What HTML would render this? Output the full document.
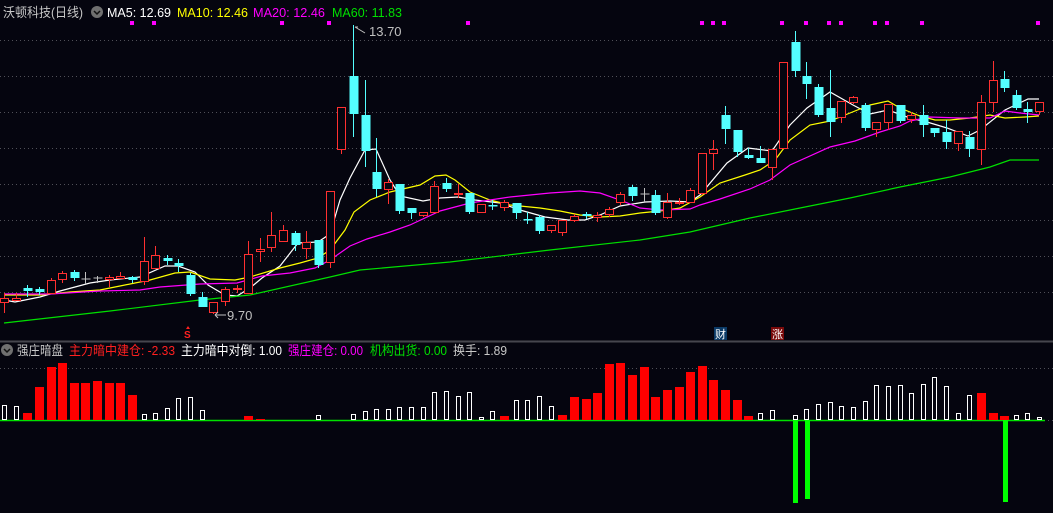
<!DOCTYPE html>
<html><head><meta charset="utf-8"><style>
html,body{margin:0;padding:0;background:#05050f;width:1053px;height:513px;overflow:hidden}
svg{display:block}
text{font-family:"Liberation Sans","Noto Sans CJK SC",sans-serif}
</style></head><body>
<svg id="s" width="1053" height="513" xmlns="http://www.w3.org/2000/svg">
<rect width="1053" height="513" fill="#05050f"/>
<g id="grid" stroke="#505058" stroke-width="1" stroke-dasharray="1,3"></g>
<line x1="0" y1="341.5" x2="1053" y2="341.5" stroke="#46464e" stroke-width="2"/>
<g id="ma"></g>
<g id="c"></g>
<g id="sub"></g>
<g id="dots" fill="#ff00ff"></g>
<text x="3" y="17" font-size="13" fill="#c8c8c8" textLength="80" lengthAdjust="spacingAndGlyphs">沃顿科技(日线)</text>
<circle cx="97" cy="12" r="6" fill="#707070"/><path d="M94 11l3 3 3-3" stroke="#111" stroke-width="1.5" fill="none"/>
<text x="107" y="17" font-size="13" fill="#ffffff" textLength="64" lengthAdjust="spacingAndGlyphs">MA5: 12.69</text>
<text x="177" y="17" font-size="13" fill="#ffff00" textLength="71" lengthAdjust="spacingAndGlyphs">MA10: 12.46</text>
<text x="253" y="17" font-size="13" fill="#ff00ff" textLength="72" lengthAdjust="spacingAndGlyphs">MA20: 12.46</text>
<text x="332" y="17" font-size="13" fill="#00e000" textLength="70" lengthAdjust="spacingAndGlyphs">MA60: 11.83</text>
<text x="369" y="36" font-size="13" fill="#c0c0c0">13.70</text>
<path d="M355 27h3M355 27l10 6" stroke="#c0c0c0" fill="none"/>
<text x="227" y="320" font-size="13" fill="#c0c0c0">9.70</text>
<path d="M215 315h11M215 315l3-3M215 315l3 3" stroke="#c0c0c0" fill="none"/>
<text x="184" y="338" font-size="10" font-weight="bold" fill="#ff2020">S</text>
<path d="M186 329l2-3 2 3z" fill="#ff2020"/>
<rect x="714" y="327" width="13" height="13" fill="#0b3a66"/>
<text x="715" y="338" font-size="11" fill="#fff">财</text>
<rect x="771" y="327" width="13" height="13" fill="#7a0a0a"/>
<text x="772" y="338" font-size="11" fill="#fff">涨</text>
<circle cx="7" cy="350" r="6" fill="#707070"/><path d="M4 349l3 3 3-3" stroke="#111" stroke-width="1.5" fill="none"/>
<text x="17" y="355" font-size="13" fill="#c8c8c8" textLength="46" lengthAdjust="spacingAndGlyphs">强庄暗盘</text>
<text x="69" y="355" font-size="13" fill="#ff2020" textLength="106" lengthAdjust="spacingAndGlyphs">主力暗中建仓: -2.33</text>
<text x="181" y="355" font-size="13" fill="#ffffff" textLength="101" lengthAdjust="spacingAndGlyphs">主力暗中对倒: 1.00</text>
<text x="288" y="355" font-size="13" fill="#ff00ff" textLength="75" lengthAdjust="spacingAndGlyphs">强庄建仓: 0.00</text>
<text x="370" y="355" font-size="13" fill="#00e000" textLength="77" lengthAdjust="spacingAndGlyphs">机构出货: 0.00</text>
<text x="453" y="355" font-size="13" fill="#c8c8c8" textLength="54" lengthAdjust="spacingAndGlyphs">换手: 1.89</text>
</svg>
<script>
var NS="http://www.w3.org/2000/svg";
function el(p,t,a){var e=document.createElementNS(NS,t);for(var k in a)e.setAttribute(k,a[k]);p.appendChild(e);return e;}
var g=document.getElementById('grid');
[40,76,112,148,184,220,256,292,368,420].forEach(function(y){el(g,'line',{x1:0,y1:y+.5,x2:1053,y2:y+.5});});
var C=[['r',298,302,293,313],['r',298,300,293,301],['c',288,291,285,297],['c',289,292,287,295],['r',280,293,278,294],
['r',273,279,271,283],['c',272,278,270,281],['g',279,280,272,284],['g',278,279,276,283],['r',277,279,275,287],
['r',276,278,272,278],['c',277,280,276,283],['r',261,281,237,285],['r',255,268,246,269],['c',258,261,255,265],
['c',263,266,259,272],['c',275,294,273,296],['c',297,307,292,307],['r',302,312,302,314],['r',289,301,287,306],
['r',288,289,285,293],['r',254,293,241,293],['r',249,251,238,262],['r',235,247,212,252],['r',230,241,225,241],
['c',233,245,231,251],['r',242,248,231,259],['c',240,265,240,268],['r',191,262,191,268],['r',107,149,107,154],
['c',76,114,25,137],['c',115,151,80,167],['c',172,189,138,197],['r',182,189,179,204],['c',184,211,184,214],
['c',208,213,208,219],['r',212,215,212,217],['r',186,212,181,213],['c',183,189,178,192],['r',193,194,184,198],
['c',193,212,193,214],['r',204,212,204,213],['c',205,206,200,210],['r',202,207,200,211],['c',203,213,203,219],
['c',219,220,212,224],['c',217,231,215,234],['r',225,230,225,233],['r',220,232,220,236],['r',216,220,214,222],
['c',214,216,212,219],['r',215,217,212,222],['r',209,214,207,217],['r',194,202,192,205],['c',187,196,185,201],
['g',194,195,188,202],['c',195,213,190,215],['r',202,217,193,219],['r',202,203,198,205],['r',190,202,188,203],
['r',153,193,153,195],['r',149,153,140,170],['c',115,129,106,144],['c',130,152,130,157],['c',155,158,148,159],
['c',158,163,146,163],['r',149,167,149,180],['r',62,148,62,148],['c',42,71,31,77],['c',76,84,62,99],
['c',87,115,84,117],['c',108,122,70,137],['r',101,117,101,123],['r',97,102,96,104],['c',105,128,103,131],
['r',122,129,122,137],['r',104,122,104,130],['c',105,121,105,123],['r',115,119,112,123],['c',115,125,105,137],
['c',128,133,128,137],['c',132,142,120,149],['r',131,143,131,151],['c',137,149,131,157],['r',102,149,95,165],
['r',80,102,61,112],['c',79,88,71,92],['c',95,108,90,110],['c',109,112,102,123],['r',102,111,102,115]];
var cg=document.getElementById('c');
function X(i){return 4+11.63*i;}
C.forEach(function(d,i){var x=Math.round(X(i))+.5;var t=d[0];
 var col=t=='r'?'#ff3030':(t=='c'?'#54ffff':'#c0c0c0');
 el(cg,'line',{x1:x,y1:d[3],x2:x,y2:d[4],stroke:col});
 if(t=='r'){var h=Math.max(d[2]-d[1],1);el(cg,'rect',{x:x-4.5+.5,y:d[1]+.5,width:8,height:h,fill:'#05050f',stroke:col});}
 else if(t=='c'){el(cg,'rect',{x:x-4,y:d[1],width:9,height:Math.max(d[2]-d[1],1.5),fill:col});}
 else{el(cg,'line',{x1:x-4,y1:d[1],x2:x+5,y2:d[1],stroke:col});}
});
var mg=document.getElementById('ma');
function pl(pts,col){el(mg,'polyline',{points:pts.map(function(p){return p.join(',')}).join(' '),fill:'none',stroke:col,'stroke-width':1.2});}
pl([[4,300],[15,302],[40,297],[60,291],[90,283],[110,280],[140,277],[165,266],[178,266],[195,272],[208,285],[225,295],[237,296],[250,288],[262,278],[280,266],[298,243],[318,242],[330,234],[340,200],[350,178],[365,150],[376,149],[390,180],[400,196],[423,201],[440,198],[458,197],[475,200],[500,203],[520,210],[545,217],[568,220],[585,220],[600,215],[620,206],[645,202],[670,201],[690,202],[700,195],[727,163],[748,148],[772,151],[790,125],[807,108],[830,92],[853,105],[870,114],[888,110],[910,118],[927,122],[947,128],[968,136],[980,130],[1005,110],[1028,99],[1039,99]],'#ffffff');
pl([[4,295],[40,295],[70,292],[100,290],[120,286],[150,280],[175,273],[190,272],[210,279],[235,280],[250,277],[280,268],[300,263],[318,258],[330,250],[345,230],[354,212],[370,200],[390,192],[420,185],[435,176],[446,175],[455,180],[470,192],[490,200],[510,205],[540,208],[560,211],[580,215],[600,217],[620,216],[640,213],[660,211],[680,208],[700,197],[720,183],[745,175],[760,170],[775,160],[790,140],[810,125],[830,121],[850,113],[870,105],[888,101],[900,108],[920,116],[935,120],[950,120],[970,118],[990,115],[1005,118],[1025,117],[1039,116]],'#ffff00');
pl([[4,294],[50,294],[100,291],[140,290],[160,287],[200,284],[237,283],[262,276],[290,273],[315,268],[330,260],[350,246],[367,239],[390,232],[410,225],[440,211],[470,203],[510,197],[550,193],[580,191],[600,193],[620,200],[640,208],[660,210],[690,209],[700,205],[720,199],[750,189],[770,180],[790,165],[830,147],[855,141],[880,132],[900,126],[910,121],[930,117],[960,118],[990,118],[1005,111],[1020,113],[1039,115]],'#ff00ff');
pl([[4,323],[110,311],[200,300],[250,295],[330,277],[360,270],[450,262],[550,250],[640,240],[690,232],[750,218],[800,208],[850,198],[900,187],[950,177],[990,167],[1010,160],[1039,160]],'#00e000');
var dg=document.getElementById('dots');
[132,154,282,329,468,702,713,724,782,806,829,841,875,887,922,1038].forEach(function(x){el(dg,'rect',{x:x-2,y:21,width:4,height:4});});
var S={0:['w',405],1:['w',406],2:['r',413],3:['r',387],4:['r',367],5:['r',363],6:['r',383],7:['r',383],8:['r',381],9:['r',383],10:['r',383],11:['r',395],
12:['w',414],13:['w',413],14:['w',408],15:['w',398],16:['w',397],17:['w',410],21:['r',416],22:['r',419],27:['w',415],
30:['w',414],31:['w',411],32:['w',409],33:['w',409],34:['w',407],35:['w',407],36:['w',407],37:['w',392],38:['w',391],39:['w',396],40:['w',392],41:['w',417],42:['w',411],43:['r',416],44:['w',400],45:['w',400],
46:['w',396],47:['w',406],48:['r',415],49:['r',397],50:['r',399],51:['r',393],52:['r',364],53:['r',363],54:['r',375],55:['r',367],56:['r',397],57:['r',390],58:['r',387],59:['r',372],60:['r',366],61:['r',380],62:['r',390],63:['r',400],64:['r',416],65:['w',413],66:['w',410],
68:['w',415],69:['w',409],70:['w',404],71:['w',402],72:['w',406],73:['w',407],74:['w',401],75:['w',385],76:['w',386],77:['w',385],78:['w',393],79:['w',384],80:['w',377],81:['w',386],82:['w',413],83:['w',395],84:['r',393],85:['r',413],86:['r',416],87:['w',415],88:['w',413],89:['w',417]};
var sg=document.getElementById('sub');
el(sg,'line',{x1:0,y1:420.5,x2:1045,y2:420.5,stroke:'#00e000','stroke-width':1.5});
for(var k in S){var i=+k,x=Math.round(X(i)),d=S[k];
 if(d[0]=='r')el(sg,'rect',{x:x-4,y:d[1],width:9,height:420-d[1],fill:'#ff0000'});
 else el(sg,'rect',{x:x-2+.5,y:d[1]+.5,width:4,height:419-d[1],fill:'none',stroke:'#ffffff'});}
[[795,503],[807,499],[1005,502]].forEach(function(p){el(sg,'rect',{x:p[0]-2,y:420,width:5,height:p[1]-420,fill:'#00ff00'});});
</script>
</body></html>
